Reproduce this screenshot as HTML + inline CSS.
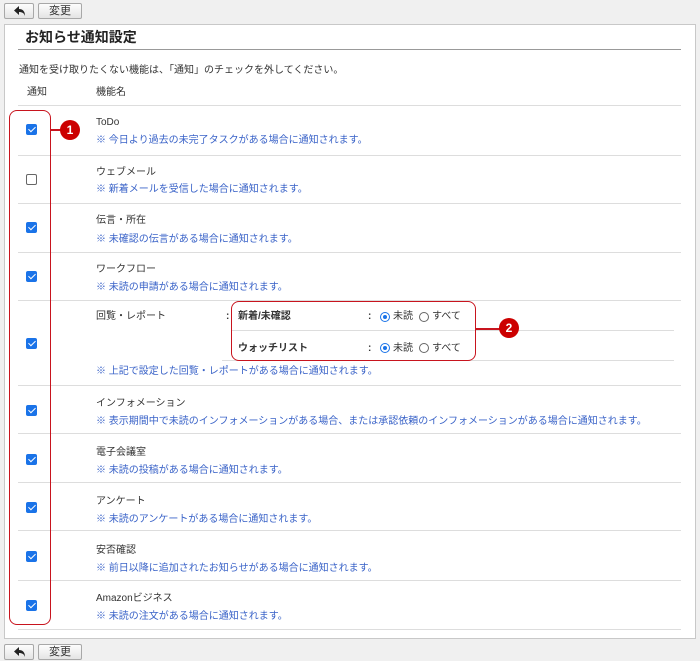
<!DOCTYPE html><html><head><meta charset="utf-8"><style>
*{margin:0;padding:0;box-sizing:border-box}
body{width:700px;height:661px;background:#f0f0f0;position:relative;font-family:"Liberation Sans","Noto Sans CJK JP",sans-serif;font-size:10px;color:#333;overflow:hidden}
.a{position:absolute;white-space:nowrap;line-height:13px;margin-top:3px}
.btn{position:absolute;height:16px;border:1px solid #a8a8a8;border-radius:2px;background:linear-gradient(#fdfdfd,#e4e4e4);font-size:11px;text-align:center;line-height:14px;color:#333}
.btn svg{position:absolute;left:9px;top:2px}
.panel{position:absolute;left:4px;top:24px;width:692px;height:615px;background:#fff;border:1px solid #c8c8c8}
.hl{position:absolute;height:1px;background:#ddd}
.cb{position:absolute;left:26px;width:11px;height:11px;border-radius:2px;background:#1a73e8}
.cb::after{content:"";position:absolute;left:3.5px;top:1px;width:3px;height:6px;border:solid #fff;border-width:0 1.6px 1.6px 0;transform:rotate(45deg)}
.cb.off{background:#fff;border:1px solid #666}.cb.off::after{display:none}
.d{color:#3a63c8}
.r{position:absolute;width:10px;height:10px;border-radius:50%;border:1px solid #666;background:#fff}
.r.on{border:1px solid #1a73e8}.r.on::after{content:"";position:absolute;left:2px;top:2px;width:4px;height:4px;border-radius:50%;background:#1a73e8}
.circ{position:absolute;width:20px;height:20px;border-radius:50%;background:#c00;color:#fff;font-weight:bold;font-size:12px;text-align:center;line-height:20px}
.red{position:absolute;border:1.5px solid #c8141e;border-radius:8px}
.rl{position:absolute;height:1.5px;background:#c8141e}
</style></head><body>
<div class="btn" style="left:4px;top:3px;width:30px"><svg width="12" height="11" viewBox="0 0 12 11"><path d="M5 0 L0 4.5 L5 9 V6 C8 6 10 7 11 10 C11 5 8.5 3 5 3 Z" fill="#222"/></svg></div>
<div class="btn" style="left:38px;top:3px;width:44px">変更</div>
<div class="panel"></div>
<div class="a" style="left:25px;top:29px;margin-top:0;font-size:14px;line-height:16px;font-weight:bold;color:#222">お知らせ通知設定</div>
<div style="position:absolute;left:18px;top:49px;width:663px;height:1px;background:#999"></div>
<div class="a" style="left:19px;top:61px">通知を受け取りたくない機能は、「通知」のチェックを外してください。</div>
<div class="a" style="left:27px;top:83px">通知</div>
<div class="a" style="left:96px;top:83px">機能名</div>
<div class="hl" style="left:18px;top:105px;width:663px"></div>
<div class="hl" style="left:18px;top:155px;width:663px"></div>
<div class="hl" style="left:18px;top:203px;width:663px"></div>
<div class="hl" style="left:18px;top:252px;width:663px"></div>
<div class="hl" style="left:18px;top:300px;width:663px"></div>
<div class="hl" style="left:231px;top:330px;width:443px"></div>
<div class="hl" style="left:222px;top:360px;width:452px"></div>
<div class="hl" style="left:18px;top:385px;width:663px"></div>
<div class="hl" style="left:18px;top:433px;width:663px"></div>
<div class="hl" style="left:18px;top:482px;width:663px"></div>
<div class="hl" style="left:18px;top:530px;width:663px"></div>
<div class="hl" style="left:18px;top:580px;width:663px"></div>
<div class="hl" style="left:18px;top:629px;width:663px"></div>

<div class="cb" style="top:124px"></div><div class="a" style="left:96px;top:113px">ToDo</div><div class="a d" style="left:96px;top:131px">※ 今日より過去の未完了タスクがある場合に通知されます。</div>
<div class="cb off" style="top:174px"></div><div class="a" style="left:96px;top:163px">ウェブメール</div><div class="a d" style="left:96px;top:180px">※ 新着メールを受信した場合に通知されます。</div>
<div class="cb" style="top:222px"></div><div class="a" style="left:96px;top:211px">伝言・所在</div><div class="a d" style="left:96px;top:230px">※ 未確認の伝言がある場合に通知されます。</div>
<div class="cb" style="top:271px"></div><div class="a" style="left:96px;top:260px">ワークフロー</div><div class="a d" style="left:96px;top:278px">※ 未読の申請がある場合に通知されます。</div>
<div class="cb" style="top:338px"></div><div class="a" style="left:96px;top:307px">回覧・レポート</div><div class="a" style="left:226px;top:307px;font-weight:bold">:</div>
<div class="a" style="left:238px;top:307px;font-weight:bold">新着/未確認</div><div class="a" style="left:368px;top:307px;font-weight:bold">:</div>
<div class="r on" style="left:380px;top:312px"></div><div class="a" style="left:393px;top:307px">未読</div><div class="r" style="left:419px;top:312px"></div><div class="a" style="left:432px;top:307px">すべて</div>
<div class="a" style="left:238px;top:339px;font-weight:bold">ウォッチリスト</div><div class="a" style="left:368px;top:339px;font-weight:bold">:</div>
<div class="r on" style="left:380px;top:343px"></div><div class="a" style="left:393px;top:339px">未読</div><div class="r" style="left:419px;top:343px"></div><div class="a" style="left:432px;top:339px">すべて</div>
<div class="a d" style="left:96px;top:362px">※ 上記で設定した回覧・レポートがある場合に通知されます。</div>
<div class="cb" style="top:405px"></div><div class="a" style="left:96px;top:394px">インフォメーション</div><div class="a d" style="left:96px;top:412px">※ 表示期間中で未読のインフォメーションがある場合、または承認依頼のインフォメーションがある場合に通知されます。</div>
<div class="cb" style="top:454px"></div><div class="a" style="left:96px;top:443px">電子会議室</div><div class="a d" style="left:96px;top:461px">※ 未読の投稿がある場合に通知されます。</div>
<div class="cb" style="top:502px"></div><div class="a" style="left:96px;top:492px">アンケート</div><div class="a d" style="left:96px;top:510px">※ 未読のアンケートがある場合に通知されます。</div>
<div class="cb" style="top:551px"></div><div class="a" style="left:96px;top:541px">安否確認</div><div class="a d" style="left:96px;top:559px">※ 前日以降に追加されたお知らせがある場合に通知されます。</div>
<div class="cb" style="top:600px"></div><div class="a" style="left:96px;top:589px">Amazonビジネス</div><div class="a d" style="left:96px;top:607px">※ 未読の注文がある場合に通知されます。</div>

<div class="red" style="left:9px;top:110px;width:42px;height:515px"></div>
<div class="rl" style="left:51px;top:129px;width:10px"></div>
<div class="circ" style="left:60px;top:120px">1</div>
<div class="red" style="left:231px;top:301px;width:245px;height:60px"></div>
<div class="rl" style="left:476px;top:328px;width:24px"></div>
<div class="circ" style="left:499px;top:318px">2</div>

<div class="btn" style="left:4px;top:644px;width:30px"><svg width="12" height="11" viewBox="0 0 12 11"><path d="M5 0 L0 4.5 L5 9 V6 C8 6 10 7 11 10 C11 5 8.5 3 5 3 Z" fill="#222"/></svg></div>
<div class="btn" style="left:38px;top:644px;width:44px">変更</div>
</body></html>
